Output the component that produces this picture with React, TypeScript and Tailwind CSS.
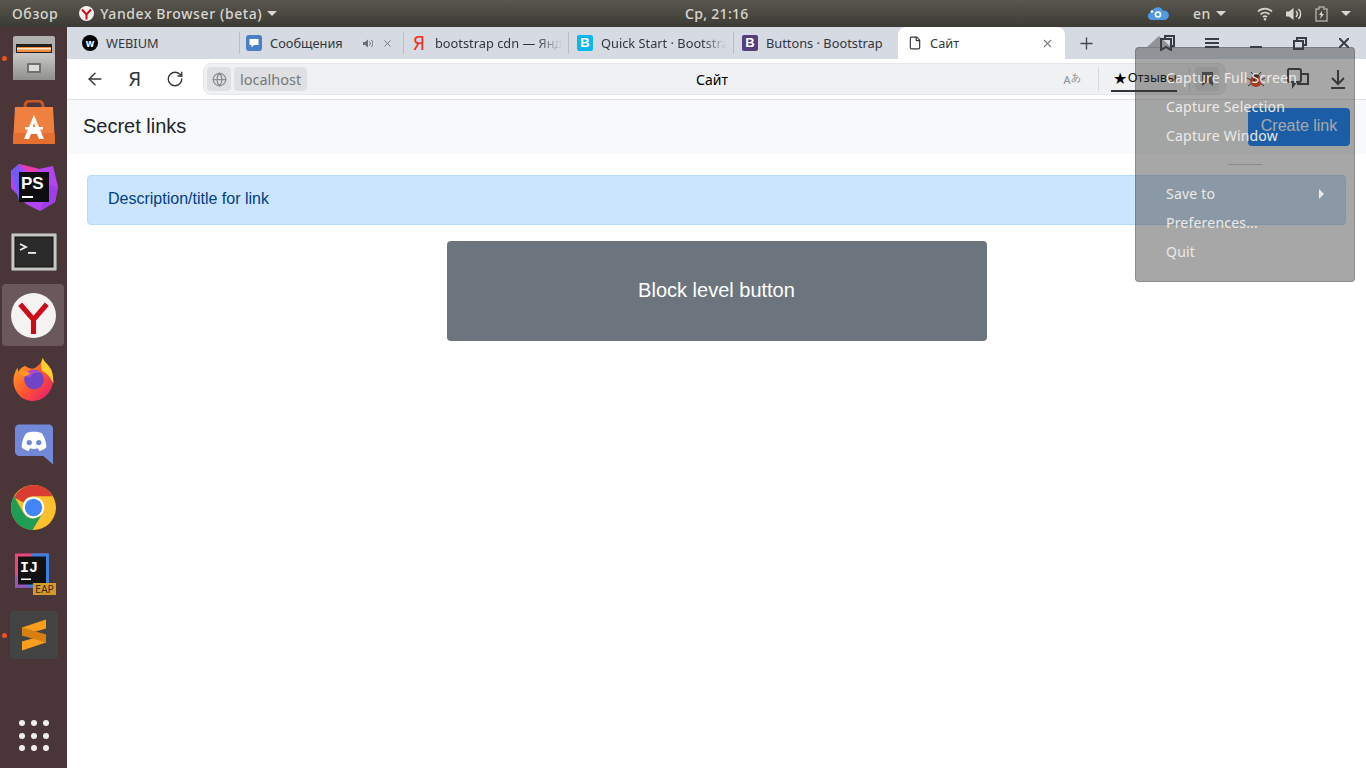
import { ArrowLeft, RotateCw, Globe, Plus, File, X } from 'lucide-react';

const uiFont = "font-['Noto_Sans',sans-serif]";

const Caret = () => <span className="inline-block w-0 h-0 border-x-[5px] border-x-transparent border-t-[5px] border-t-[#d8d6d0]" />;

const DockDot = () => <span className="absolute left-[2px] top-1/2 -mt-[2.5px] w-[5px] h-[5px] rounded-full bg-[#e9541f]" />;

const FilesIcon = () => (
    <svg width="42" height="44" viewBox="0 0 42 44">
        <defs>
            <linearGradient id="cab" x1="0" y1="0" x2="0" y2="1">
                <stop offset="0" stopColor="#c9c9c7" />
                <stop offset="1" stopColor="#8f8f8d" />
            </linearGradient>
        </defs>
        <rect x="0" y="0" width="42" height="44" rx="2" fill="#b0b0ae" />
        <rect x="3" y="8" width="36" height="10" fill="#23211f" />
        <rect x="4" y="11" width="34" height="5" fill="#f08a3c" />
        <rect x="4" y="12" width="34" height="1.500" fill="#f8e6c8" />
        <path d="M3 17h36l3 2v25H0V19z" fill="url(#cab)" />
        <rect x="14" y="27" width="14" height="10" rx="1" fill="#6f6f6d" />
        <rect x="16" y="29" width="10" height="6" fill="#dcdcda" />
    </svg>
);

const StoreIcon = () => (
    <svg width="44" height="44" viewBox="0 0 44 44">
        <path d="M13 12V6c0-3 2-5 5-5h8c3 0 5 2 5 5v6" fill="none" stroke="#c9552a" strokeWidth="3" />
        <path d="M3 7h38l2 37H1z" fill="#f08040" />
        <path d="M1.500 33h41l.5 11H1z" fill="#e56f30" />
        <path d="M22 15l-10 24h5l2-5h6l2 5h5L22 15zM20 29l2-6 2 6z" fill="#fff" />
        <rect x="13" y="27" width="18" height="2.500" fill="#fff" />
    </svg>
);

const PhpStormIcon = () => (
    <svg width="48" height="49" viewBox="0 0 48 49">
        <path d="M9 1l20 5 14-3 5 21-3 15-15 9-14-7L1 25 1 8z" fill="#b345f1" />
        <path d="M1 8l8 30 10-3L9 1z" fill="#765af8" />
        <path d="M9 1l20 5-6 6z" fill="#ee3aa8" />
        <path d="M30 48l15-9 3-15-10-2z" fill="#a03fe8" />
        <rect x="9" y="9" width="30" height="30" fill="#0e0e10" />
        <text x="11" y="26" fill="#fff" fontSize="17" fontWeight="700" fontFamily="Liberation Sans, sans-serif">PS</text>
        <rect x="12" y="33" width="11" height="2" fill="#fff" />
    </svg>
);

const TerminalIcon = () => (
    <svg width="46" height="38" viewBox="0 0 46 38">
        <rect x="0.500" y="0.500" width="45" height="37" rx="1" fill="#c6c6c4" stroke="#8a8a88" />
        <rect x="4" y="4" width="38" height="30" fill="#2a2a2a" stroke="#111" />
        <path d="M9 11l6 3-6 3" fill="none" stroke="#eee" strokeWidth="1.800" />
        <rect x="17" y="19" width="8" height="1.800" fill="#eee" />
    </svg>
);

const YandexIcon = () => (
    <svg width="45" height="45" viewBox="0 0 44 44">
        <circle cx="22" cy="22" r="22" fill="#f4f3f2" />
        <path d="M9 11l13 15 13-15M22 26v14" fill="none" stroke="#cc0c17" strokeWidth="5" />
    </svg>
);

const FirefoxIcon = () => (
    <svg width="44" height="45" viewBox="0 0 44 46">
        <defs>
            <linearGradient id="ffx" x1="0" y1="0" x2="1" y2="1">
                <stop offset="0" stopColor="#ffb11f" />
                <stop offset="0.500" stopColor="#ff5a2c" />
                <stop offset="1" stopColor="#e6127c" />
            </linearGradient>
        </defs>
        <path d="M31 1c1 5 9 8 10 17 3 14-7 27-20 27C9 45 1 35 1 24c0-5 2-10 4-13l1 4c2-3 4-5 7-6 2 2 5 3 8 3 5-2 9-6 10-11z" fill="url(#ffx)" />
        <path d="M31 1c1 5 9 8 10 17l1 9c-3-5-6-10-12-13-1-5-1-9 1-13z" fill="#ffd02f" />
        <circle cx="22" cy="23" r="10" fill="#6e45c8" />
        <path d="M12 19c3-5 13-7 18-3-6-1-11 1-12 5z" fill="#b34ad0" />
        <path d="M6 16c4-3 9-2 12 1l-5 3z" fill="#ff9a1f" />
    </svg>
);

const DiscordIcon = () => (
    <svg width="38" height="41" viewBox="0 0 40 42">
        <path d="M4 0h32c2 0 4 2 4 4v38l-10-9H4c-2 0-4-2-4-4V4c0-2 2-4 4-4z" fill="#7289da" />
        <path d="M12 9c5-2 11-2 16 0 3 4 5 9 5 15-2 2-4 3-7 4l-2-3c-3 1-5 1-8 0l-2 3c-3-1-5-2-7-4 0-6 2-11 5-15z" fill="#fff" />
        <circle cx="15" cy="19" r="2.800" fill="#7289da" />
        <circle cx="25" cy="19" r="2.800" fill="#7289da" />
    </svg>
);

const ChromeIcon = () => (
    <svg width="45" height="45" viewBox="0 0 44 44">
        <circle cx="22" cy="22" r="22" fill="#fbc02d" />
        <path d="M22 0a22 22 0 0 1 19 11H22a11 11 0 0 0-10 6L3 12A22 22 0 0 1 22 0z" fill="#d93c30" />
        <path d="M3 11A22 22 0 0 0 21 44l9-15-8 4a11 11 0 0 1-10-6z" fill="#1f9d55" />
        <circle cx="22" cy="22" r="10.500" fill="#fff" />
        <circle cx="22" cy="22" r="8.500" fill="#4285f4" />
    </svg>
);

const IntellijIcon = () => (
    <div className="relative w-[41px] h-[42px]">
        <svg width="34" height="35" viewBox="0 0 34 34">
            <rect width="34" height="34" fill="#f0447c" />
            <path d="M17 0h17v34L0 34l8-8z" fill="#3b82e0" />
            <path d="M0 20l14 14H0z" fill="#9a55b8" />
            <rect x="3" y="3" width="28" height="28" fill="#111" />
            <text x="5" y="18" fill="#fff" fontSize="15" fontWeight="700" fontFamily="Liberation Mono, monospace">IJ</text>
            <rect x="6" y="25" width="10" height="1.500" fill="#fff" />
        </svg>
        <span className="absolute right-0 bottom-0 h-3 w-[23px] bg-[#d79a28] text-[10.500px] leading-3 text-center text-[#3a2a10]">EAP</span>
    </div>
);

const SublimeIcon = () => (
    <div className="w-12 h-12 rounded bg-[#444343] flex items-center justify-center">
        <svg width="24" height="32" viewBox="0 0 24 31">
            <path d="M24 0v9L0 16V8z" fill="#fa9e1b" />
            <path d="M0 22l24-7v8L0 31z" fill="#fa9e1b" />
            <path d="M0 8v8l24 7v-8z" fill="#d97f12" />
        </svg>
    </div>
);

const dockItems = [
    { node: <FilesIcon />, cell: 'h-[62px]', dot: true },
    { node: <StoreIcon />, cell: 'h-[65px]' },
    { node: <PhpStormIcon />, cell: 'h-[66px]' },
    { node: <TerminalIcon />, cell: 'h-[64px]' },
    { node: <YandexIcon />, cell: 'h-[62px]', dot: true, active: true },
    { node: <FirefoxIcon />, cell: 'h-[66px]' },
    { node: <DiscordIcon />, cell: 'h-[64px]' },
    { node: <ChromeIcon />, cell: 'h-[62px]' },
    { node: <IntellijIcon />, cell: 'h-[66px] pt-[6px] pl-[4px]' },
    { node: <SublimeIcon />, cell: 'h-[62px]', dot: true },
];

const Dock = () => (
    <div className="w-[67px] shrink-0 bg-[#4a3639] flex flex-col items-center pb-[17px]">
        {dockItems.map((item, i) => (
            <div key={i} className={`relative w-full flex items-center justify-center ${item.cell}`}>
                {item.dot && <DockDot />}
                {item.active && <div className="absolute left-[2px] top-0 bottom-0 w-[62px] rounded bg-[#6a585b]" />}
                <div className="relative flex items-center justify-center">{item.node}</div>
            </div>
        ))}
        <div className="mt-auto grid grid-cols-3 gap-x-[6px] gap-y-[6.500px]">
            {Array.from({ length: 9 }).map((_, i) => <span key={i} className="w-[6px] h-[6px] rounded-full bg-[#eeeeee]" />)}
        </div>
    </div>
);

const TopBar = () => (
    <div className={`h-[27px] shrink-0 relative flex items-center bg-gradient-to-b from-[#5a574e] to-[#3b3a35] text-[#d9d6cf] text-[14px] font-medium tracking-[0.6px] ${uiFont}`}>
        <span className="ml-3">Обзор</span>
        <span className="ml-[21px] w-[15px] h-[15px]">
            <svg viewBox="0 0 15 15" width="15" height="15">
                <circle cx="7.500" cy="7.500" r="7.500" fill="#f4f3f2" />
                <path d="M3 3.500l4.500 5 4.500-5M7.500 8.500v5" fill="none" stroke="#cc0c17" strokeWidth="2" />
            </svg>
        </span>
        <span className="ml-[6px] mr-[5px]">Yandex Browser (beta)</span>
        <Caret />
        <span className="absolute left-[685px] tracking-[0.3px]">Ср, 21:16</span>
        <div className="ml-auto flex items-center">
            <svg width="22" height="13" viewBox="0 0 22 13">
                <path d="M4.500 13a4 4 0 0 1-1.500-7.500 5.500 5.500 0 0 1 3-3 6 6 0 0 1 10 1 4.500 4.500 0 0 1 2 9.500z" fill="#4f9ae0" />
                <circle cx="11" cy="7.500" r="3.300" fill="#fff" />
                <circle cx="11" cy="7.500" r="1.700" fill="#4f9ae0" />
                <circle cx="5" cy="4.500" r="1.200" fill="#fff" />
            </svg>
            <span className="ml-6 mr-[5px]">en</span>
            <Caret />
            <svg width="16" height="14" viewBox="0 0 16 14" fill="none" stroke="#d9d6cf" strokeWidth="1.700" className="ml-[31px]">
                <path d="M1 4.500a10 10 0 0 1 14 0M3.500 7.300a6.500 6.500 0 0 1 9 0M6 10a3 3 0 0 1 4 0" />
                <circle cx="8" cy="12.300" r="1.200" fill="#d9d6cf" stroke="none" />
            </svg>
            <svg width="16" height="14" viewBox="0 0 16 14" className="ml-[13px]">
                <path d="M0 4.500h3L7.500 1v12L3 9.500H0z" fill="#d9d6cf" />
                <path d="M10 4a4 4 0 0 1 0 6M12.500 2a7 7 0 0 1 0 10" fill="none" stroke="#d9d6cf" strokeWidth="1.500" />
            </svg>
            <svg width="13" height="16" viewBox="0 0 13 16" className="ml-[13px]">
                <path d="M4 1h5v2h3v12H1V3h3z" fill="none" stroke="#a9a7a0" strokeWidth="1.500" />
                <path d="M7 5L4 9h2l-1 4 4-5H7z" fill="#d9d6cf" />
            </svg>
            <span className="ml-[13px] mr-[15px] flex"><Caret /></span>
        </div>
    </div>
);

type TabProps = { width: string; pad: string; icon: React.ReactNode; label: string; extra?: React.ReactNode; fade?: boolean; divider?: boolean };

const Tab = ({ width, pad, icon, label, extra, fade, divider }: TabProps) => (
    <div className={`${width} ${pad} shrink-0 h-full relative flex items-center pr-[7px] ${divider ? 'after:absolute after:right-0 after:top-[5px] after:bottom-[5px] after:w-px after:bg-[#b9bdc6]' : ''}`}>
        <span className="w-4 h-4 shrink-0 flex items-center justify-center">{icon}</span>
        <span className={`ml-[8px] pt-px flex-1 whitespace-nowrap overflow-hidden text-[12.800px] text-[#33363b] ${fade ? '[mask-image:linear-gradient(to_right,black_80%,transparent)]' : ''}`}>{label}</span>
        {extra}
    </div>
);

const square = (bg: string, letter: string) => (
    <span className={`w-4 h-4 rounded-[2px] ${bg} flex items-center justify-center text-white text-[13px] font-bold font-['Liberation_Sans',sans-serif]`}>{letter}</span>
);

const TabStrip = () => (
    <div className={`h-[32px] shrink-0 flex bg-[#d5dae3] text-[#383c42] ${uiFont}`}>
        <Tab width="w-[173px]" pad="pl-[15px]" divider label="WEBIUM" icon={
            <span className="w-4 h-4 rounded-full bg-black text-white flex items-center justify-center text-[10px] font-bold leading-none">w</span>
        } />
        <Tab width="w-[164px]" pad="pl-[6px]" divider label="Сообщения" icon={
            <svg width="16" height="16" viewBox="0 0 16 16"><rect width="16" height="16" rx="3" fill="#4a7fc1" /><path d="M3.500 4h9v6H8l-2.500 2.500V10h-2z" fill="#fff" /></svg>
        } extra={
            <span className="flex items-center gap-[9px] mr-[4px] text-[#6b6e73]">
                <svg width="10" height="9" viewBox="0 0 10 9"><path d="M0 3h2l3-2.500v8L2 6H0z" fill="#6b6e73" /><path d="M6.500 2.500a3 3 0 0 1 0 4M8.500 1a5 5 0 0 1 0 7" fill="none" stroke="#6b6e73" /></svg>
                <X size={11} />
            </span>
        } />
        <Tab width="w-[165px]" pad="pl-[7px]" divider fade label="bootstrap cdn — Янд" icon={
            <span className="text-[#f0301a] text-[19px] leading-none">Я</span>
        } />
        <Tab width="w-[165px]" pad="pl-[8px]" divider fade label="Quick Start · Bootstra" icon={square('bg-[#0db7ed]', 'B')} />
        <Tab width="w-[164px]" pad="pl-[8px]" label="Buttons · Bootstrap" icon={square('bg-[#563d7c]', 'B')} />
        <div className="w-[167px] shrink-0 h-full bg-white rounded-t-[8px] flex items-center pl-[10px] pr-[11px]">
            <File size={14} className="text-[#33363b]" />
            <span className="ml-[8px] pt-px flex-1 text-[12.800px] text-[#33363b]">Сайт</span>
            <X size={13} className="text-[#7b7e83]" />
        </div>
        <div className="ml-[12px] flex items-center text-[#44474c]"><Plus size={19} strokeWidth={1.700} /></div>
        <div className="ml-auto flex items-center">
            <svg width="15" height="16" viewBox="0 0 15 16" fill="none" stroke="#3a3e44" strokeWidth="2">
                <path d="M5 3V1h9v10h-2" />
                <path d="M1 4h10v11l-5-3-5 3z" />
            </svg>
            <svg width="14" height="10" viewBox="0 0 14 10" stroke="#3a3e44" strokeWidth="2" className="ml-[30px]">
                <path d="M0 1h14M0 5h14M0 9h14" />
            </svg>
            <span className="ml-[31px] mt-[8px] w-3 h-[2px] bg-[#3a3e44]" />
            <svg width="14" height="13" viewBox="0 0 14 13" fill="none" stroke="#3a3e44" strokeWidth="2" className="ml-[31px]">
                <path d="M4 3V1h9v7h-3" />
                <rect x="1" y="4" width="9" height="8" />
            </svg>
            <svg width="10" height="10" viewBox="0 0 10 10" stroke="#3a3e44" strokeWidth="2" className="ml-[32px] mr-[17px]">
                <path d="M0 0l10 10M10 0L0 10" />
            </svg>
        </div>
    </div>
);

const Toolbar = () => (
    <div className={`h-[41px] shrink-0 flex items-center bg-white border-b border-[#dfe1e5] ${uiFont}`}>
        <ArrowLeft size={20} strokeWidth={1.700} className="ml-[18px] text-[#33363b]" />
        <span className="ml-[20px] w-[20px] text-[20px] text-[#33363b] text-center">Я</span>
        <RotateCw size={18} strokeWidth={1.800} className="ml-[21px] text-[#33363b]" />
        <div className="relative ml-[19px] w-[1023px] h-[32px] flex items-center rounded-[8px] bg-[#f0f1f3] border border-[#e4e6e9]">
            <span className="ml-[3px] w-6 h-6 rounded bg-[#dfe0e2] flex items-center justify-center">
                <Globe size={15} className="text-[#8a8c90]" />
            </span>
            <span className="ml-[3px] h-6 px-[6px] rounded bg-[#dfe0e2] text-[14.500px] leading-6 text-[#75787d]">localhost</span>
            <span className="absolute left-[492px] text-[14px] text-black">Сайт</span>
            <span className="ml-auto text-[11px] text-[#8a8c90] mt-[3px]">A</span>
            <span className="text-[10px] text-[#8a8c90] -mt-[4px]">あ</span>
            <span className="ml-[17px] h-[24px] w-px bg-[#d9dbdf]" />
            <div className="ml-[12px] h-[26px] pl-[2px] flex items-center gap-[1px] border-b-2 border-[#33363b] text-[13px] text-black">
                <span className="text-[16px] leading-none">★</span>
                <span>Отзывы</span>
            </div>
            <span className="ml-[12px] h-[24px] w-px bg-[#d9dbdf]" />
            <span className="ml-[5px] mr-[6px] w-6 h-6 rounded bg-[#dfe0e2] flex items-center justify-center">
                <svg width="11" height="14" viewBox="0 0 11 14"><path d="M0 0h11v14l-5.500-4L0 14z" fill="#555" /></svg>
            </span>
        </div>
        <span className="ml-[21px] w-[18px] h-[18px]">
            <svg viewBox="0 0 18 18" width="18" height="18">
                <path d="M4 2l4 5M14 2l-4 5M0 8l4 2M18 8l-4 2M1 16l4-3M17 16l-4-3" stroke="#222" strokeWidth="1" />
                <circle cx="9" cy="11" r="6" fill="#ff3f10" />
                <circle cx="9" cy="5.500" r="2.500" fill="#222" />
                <circle cx="7" cy="10" r="1" fill="#222" /><circle cx="11" cy="12" r="1" fill="#222" />
            </svg>
        </span>
        <span className="ml-[22px] w-[22px] h-[22px]">
            <svg viewBox="0 0 22 22" width="22" height="22" fill="none" stroke="#33363b" strokeWidth="2">
                <path d="M2 1h10c1 0 2 1 2 2v9c0 1-1 2-2 2H9l-3 4v-4H2c-1 0-1-1-1-2V3c0-1 0-2 1-2z" />
                <path d="M14 6h7v10H10" />
            </svg>
        </span>
        <svg width="14" height="19" viewBox="0 0 14 19" fill="none" stroke="#33363b" strokeWidth="2" className="ml-[22px]">
            <path d="M7 0v14M1 8l6 6 6-6M0 18h14" />
        </svg>
    </div>
);

const Page = () => (
    <div className="flex-1 bg-white font-['Liberation_Sans',sans-serif]">
        <div className="h-[54px] bg-[#f8f9fa] flex items-center justify-between pl-4 pr-4">
            <span className="text-[20px] text-[#212529] pb-[2px]">Secret links</span>
            <button className="h-[38px] w-[102px] pb-[2px] rounded-[4px] bg-[#007bff] text-white text-[16px]">Create link</button>
        </div>
        <div className="mt-[21px] mx-5 h-[50px] flex items-center px-5 pb-[2px] rounded-[4px] bg-[#cce5ff] border border-[#b8daff] text-[16px] text-[#004085]">
            Description/title for link
        </div>
        <div className="mt-4 flex justify-center">
            <button className="w-[540px] h-[100px] pb-[2px] rounded-[4px] bg-[#6c757d] text-white text-[20px]">Block level button</button>
        </div>
    </div>
);

const menuItems = ['Capture Full Screen', 'Capture Selection', 'Capture Window'];

const ScreenshotMenu = () => (
    <div className={`absolute left-[1135px] top-[47px] w-[220px] h-[235px] rounded-[4px] bg-[#3c3c3c]/45 border border-[#3c3c3c]/25 text-[14px] tracking-[0.2px] text-[#eceae6] ${uiFont}`}>
        <span className="absolute -top-[12px] left-[11px] w-0 h-0 border-x-[12px] border-x-transparent border-b-[11px] border-b-[#3c3c3c]/45" />
        <div className="pt-[15px] pl-[30px]">
            {menuItems.map((t) => <div key={t} className="h-[29px] leading-[29px]">{t}</div>)}
        </div>
        <div className="mt-[14px] mx-auto w-[34px] h-px bg-[#8d8b86]" />
        <div className="mt-[14px] pl-[30px] pr-[30px]">
            <div className="h-[29px] leading-[29px] flex items-center justify-between">
                Save to
                <span className="w-0 h-0 border-y-[5px] border-y-transparent border-l-[5px] border-l-[#eceae6]" />
            </div>
            <div className="h-[29px] leading-[29px]">Preferences...</div>
            <div className="h-[29px] leading-[29px]">Quit</div>
        </div>
    </div>
);

export default function App() {
    return (
        <div className="relative w-[1366px] h-[768px] overflow-hidden flex flex-col">
            <TopBar />
            <div className="flex-1 flex min-h-0">
                <Dock />
                <div className="flex-1 flex flex-col min-w-0">
                    <TabStrip />
                    <Toolbar />
                    <Page />
                </div>
            </div>
            <ScreenshotMenu />
        </div>
    );
}
